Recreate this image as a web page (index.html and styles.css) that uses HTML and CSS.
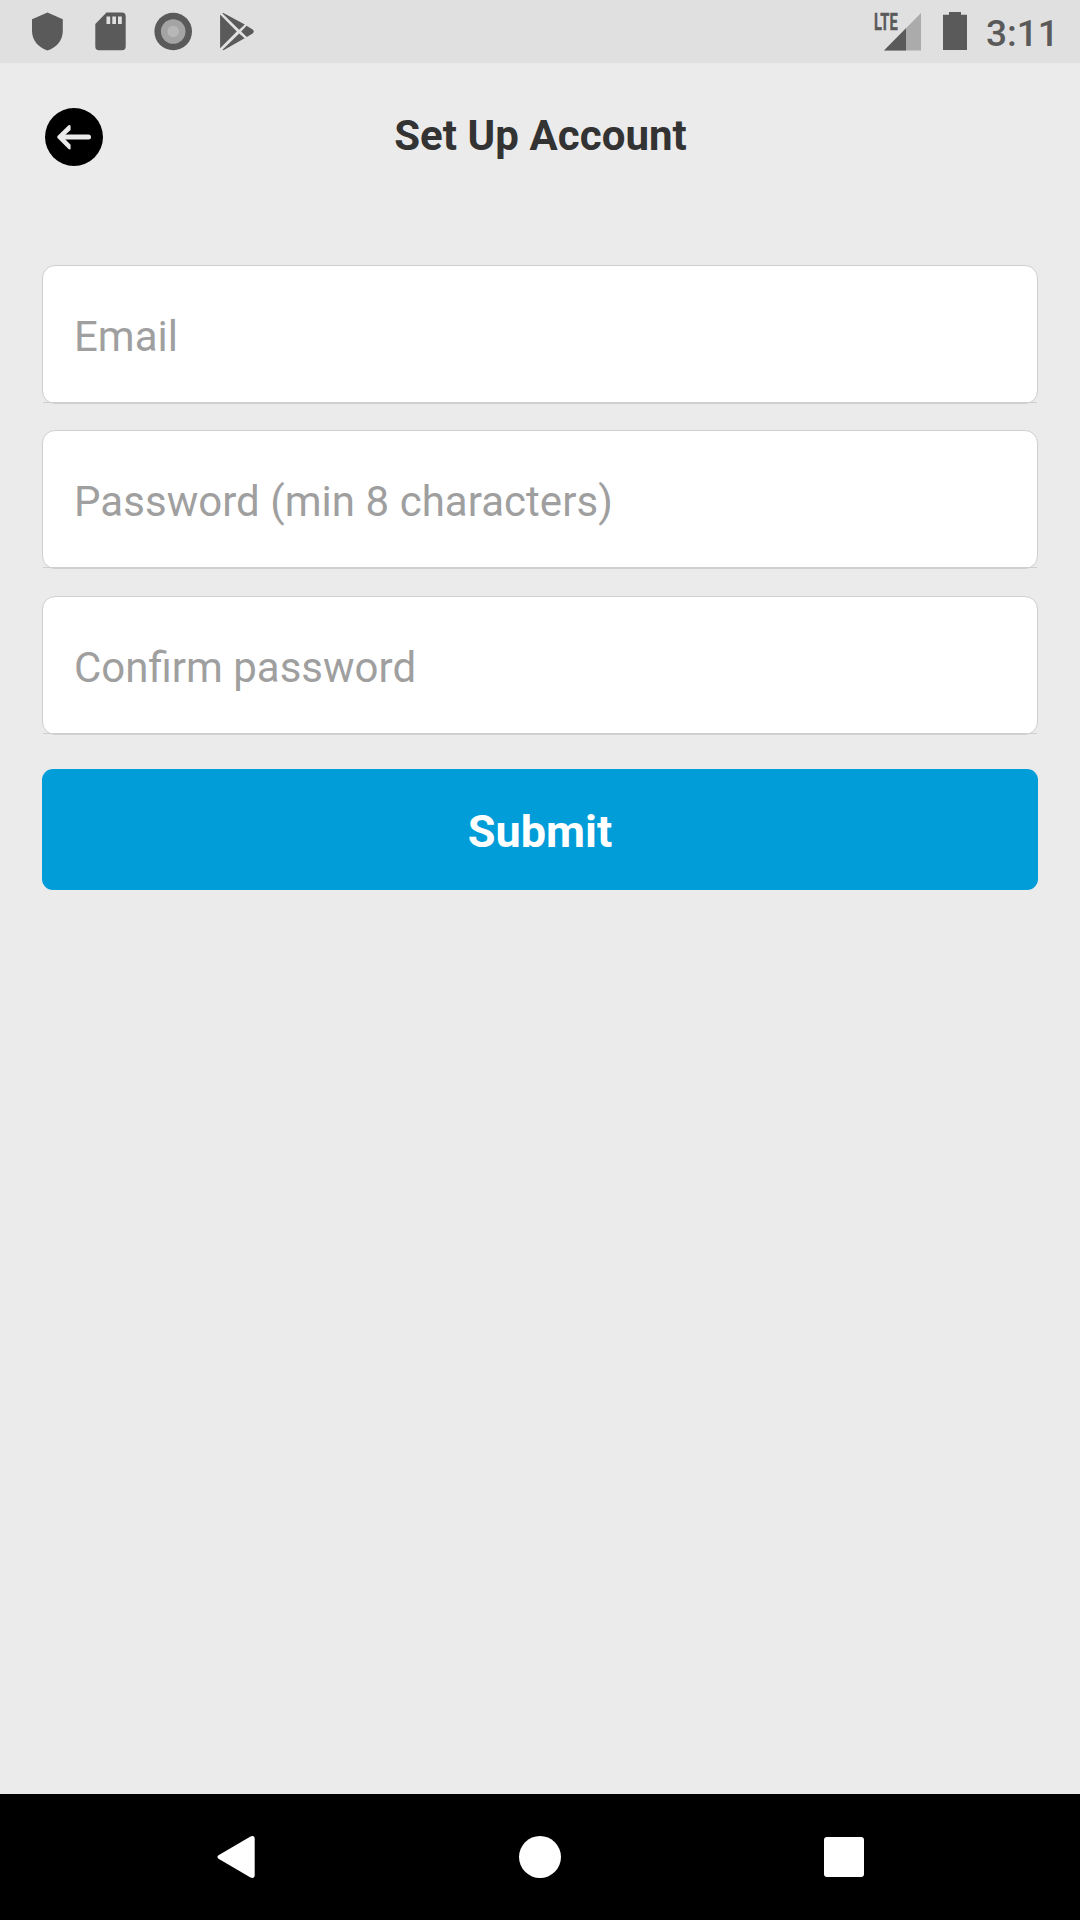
FILE: index.html
```html
<!DOCTYPE html>
<html lang="en">
<head>
<meta charset="utf-8">
<title>Set Up Account</title>
<link rel="stylesheet" href="styles.css">
</head>
<body>
<div class="screen">
  <div class="status-bar">
    <div class="status-group notifications">
      <svg width="32" height="39" viewBox="0 0 32 39"><path d="M15.5 .5 30.8 7.3V19C30.8 28 24.5 36 15.5 38.4 6.5 36 0 28 0 19V7.3Z"/></svg>
      <svg width="31" height="39" viewBox="0 0 31 39"><path fill-rule="evenodd" d="M11.5.5H27Q30.7.5 30.7 4.5V34.5Q30.7 38.3 27 38.3H4Q.3 38.3.3 34.5V12ZM11.5 4.5V12H15.2V4.5ZM17.3 4.5V12H21V4.5ZM23 4.5V12H26.8V4.5Z"/></svg>
      <svg width="38" height="39" viewBox="0 0 38 39"><circle cx="19.2" cy="19.5" r="18.8"/><circle class="ring" cx="19.2" cy="19.5" r="12.3"/><circle class="core" cx="19.2" cy="19.5" r="5.8"/></svg>
      <svg width="35" height="39" viewBox="0 0 35 39"><path d="M.1 2.5 16.8 19.5.1 36.2ZM3 .7 24.8 12.6 19.2 17.8 2.5 1.5ZM26.6 13.8 33 17.7Q34.8 19.4 33 21.2L26.8 25 21.2 19.4ZM19.2 21.5 24.6 26.3 3.5 38.3 2.5 37.7Z"/></svg>
    </div>
    <div class="status-group system">
      <div class="signal">
        <svg width="37" height="38" viewBox="0 0 37 38"><path class="signal-empty" d="M37 0V37.5H0Z"/><path d="M22 15.2V37.5H0Z"/></svg>
        <span class="network">LTE</span>
      </div>
      <svg class="battery" width="24" height="38" viewBox="0 0 24 38"><path d="M6 0H18V2.8H24V38H0V2.8H6Z"/></svg>
      <span class="clock">3:11</span>
    </div>
  </div>

  <header class="header">
    <button class="back" aria-label="Back">
      <svg width="58" height="58" viewBox="0 0 58 58"><circle cx="29" cy="29" r="29"/><path class="arrow" d="M43.5 29H17"/><path class="arrow-head" d="M25.6 17.8V22L19.8 27.2V30.8L25.6 36.8V41Q24.8 41.8 23.5 41L12.5 30Q11.8 29 12.5 28L23.5 17.3Q24.9 16.6 25.6 17.8Z"/></svg>
    </button>
    <h1 class="title">Set Up Account</h1>
  </header>

  <form class="form">
    <div class="field"><input type="email" placeholder="Email"></div>
    <div class="field"><input type="password" placeholder="Password (min 8 characters)"></div>
    <div class="field"><input type="password" placeholder="Confirm password"></div>
    <button class="submit" type="button">Submit</button>
  </form>

  <nav class="nav-bar">
    <svg width="40" height="44" viewBox="0 0 40 44"><path d="M2.5 20.3 34.5 1.6Q38.7-.1 38.7 4.2V39.8Q38.7 44.1 34.5 42.4L2.5 23.7Q.3 22 2.5 20.3Z"/></svg>
    <svg width="42" height="42" viewBox="0 0 42 42"><circle cx="21" cy="21" r="21"/></svg>
    <svg width="40" height="40" viewBox="0 0 40 40"><rect width="40" height="40" rx="3"/></svg>
  </nav>
</div>
</body>
</html>
```

FILE: styles.css
```css
* {
  box-sizing: border-box;
}

body {
  margin: 0;
  font-family: Roboto, "Liberation Sans", sans-serif;
}

svg {
  display: block;
  flex: none;
}

button {
  border: 0;
  padding: 0;
  font-family: inherit;
}

.screen {
  display: flex;
  flex-direction: column;
  width: 1080px;
  height: 1920px;
  background: #ebebeb;
}

.status-bar {
  display: flex;
  justify-content: space-between;
  height: 63px;
  padding: 12px 24px 0 32px;
  background: #e0e0e0;
  color: #5a5a5a;
  fill: #5a5a5a;
}

.status-group {
  display: flex;
  align-items: flex-start;
}

.notifications {
  gap: 31px;
}

.notifications svg:nth-child(3) {
  margin-left: -3px;
}

.notifications svg:nth-child(4) {
  margin-left: -3px;
}

.ring {
  fill: #a4a4a4;
}

.core {
  fill: #b7b7b7;
}

.signal {
  position: relative;
  padding: 1px 0 0 9px;
}

.signal-empty {
  fill: #ababab;
}

.network {
  position: absolute;
  left: -1px;
  top: -1px;
  font-size: 23px;
  line-height: 23px;
  font-weight: 700;
  -webkit-text-stroke: 0.4px #5a5a5a;
  transform: scaleX(0.64);
  transform-origin: left;
}

.battery {
  margin-left: 22px;
}

.clock {
  width: 71px;
  margin-left: 19px;
  font-size: 37px;
  line-height: 43px;
  font-weight: 500;
  white-space: nowrap;
}

.system {
  margin-right: -1px;
}

.header {
  display: grid;
  grid-template-columns: 58px 1fr 58px;
  align-items: center;
  height: 147px;
  padding: 0 45px;
}

.back {
  background: none;
}

.arrow {
  stroke: #ebebeb;
  stroke-width: 5;
  stroke-linecap: round;
}

.arrow-head {
  fill: #ebebeb;
}

.title {
  margin: 0;
  padding: 0 0 2px 1px;
  font-size: 42px;
  line-height: 50px;
  font-weight: 700;
  letter-spacing: 0.06px;
  color: #333;
  text-align: center;
}

.form {
  display: flex;
  flex: 1;
  flex-direction: column;
  padding: 55px 42px 0;
}

.field {
  position: relative;
  height: 139px;
  margin-bottom: 26px;
  border: 1px solid #cfcfcf;
  border-radius: 13px;
  background: #fff;
}

.field:nth-child(2) {
  margin-bottom: 27px;
}

.field:nth-child(2) input {
  letter-spacing: 0.04px;
}

.field:nth-child(3) {
  margin-bottom: 34px;
}

.field::after {
  content: "";
  position: absolute;
  right: 0;
  bottom: 0;
  left: 0;
  height: 1px;
  background: #cfcfcf;
}

.field input {
  width: 100%;
  height: 100%;
  padding: 3px 31px 0;
  border: 0;
  outline: 0;
  background: none;
  font: 400 42px Roboto, "Liberation Sans", sans-serif;
}

.field input::placeholder {
  color: #9f9f9f;
  opacity: 1;
}

.submit {
  height: 121px;
  padding-top: 4px;
  border-radius: 11px;
  background: #009dd9;
  color: #fff;
  font-size: 45px;
  font-weight: 700;
}

.nav-bar {
  display: flex;
  align-items: center;
  justify-content: space-between;
  height: 126px;
  padding: 0 216px;
  background: #000;
  fill: #fff;
}
```
